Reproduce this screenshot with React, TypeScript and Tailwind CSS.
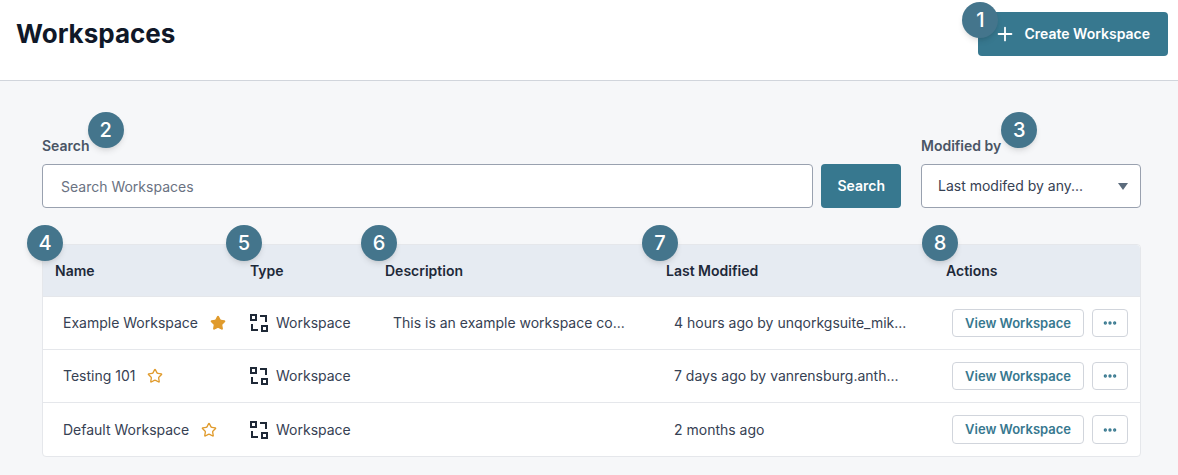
import React from 'react';
import { Ellipsis, Plus, Star } from 'lucide-react';

const Badge: React.FC<{ n: number; className: string }> = ({ n, className }) => (
  <span
    className={`absolute z-10 flex h-9 w-9 items-center justify-center rounded-full bg-[#44758c] text-xl font-medium text-white shadow-md ${className}`}
  >
    {n}
  </span>
);

const WorkspaceIcon = () => (
  <svg width="18" height="18" viewBox="0 0 18 18" fill="none" stroke="#1f2937" strokeWidth="2" className="shrink-0">
    <rect x="1" y="1" width="5" height="5" />
    <rect x="12" y="12" width="5" height="5" />
    <path d="M10 2h6v6" />
    <path d="M2 10v6h6" />
  </svg>
);

const rows = [
  {
    name: 'Example Workspace',
    starred: true,
    description: 'This is an example workspace co...',
    modified: '4 hours ago by unqorkgsuite_mik...',
  },
  { name: 'Testing 101', starred: false, description: '', modified: '7 days ago by vanrensburg.anth...' },
  { name: 'Default Workspace', starred: false, description: '', modified: '2 months ago' },
];

const columns = 'grid grid-cols-[195px_135px_281px_280px_1fr]';

export default function App() {
  return (
    <div className="flex h-[475px] flex-col overflow-hidden bg-[#f6f7f9] font-['Inter',sans-serif] text-sm text-gray-700">
      <header className="relative z-10 flex h-20 shrink-0 items-start justify-between bg-white pl-4 pr-2.5 pt-3 ring-1 ring-gray-300">
        <h1 className="mt-1 text-[26px] font-bold leading-9 text-gray-900">Workspaces</h1>
        <button className="relative flex h-11 items-center gap-2 rounded bg-[#37788f] pl-4 pr-4.5 text-sm font-semibold text-white">
          <Badge n={1} className="-left-4 -top-2.5" />
          <Plus size={22} strokeWidth={2} />
          Create Workspace
        </button>
      </header>

      <main className="flex flex-col gap-9 pl-[42px] pr-[37px] pt-14">
        <div className="flex items-end gap-2">
          <div className="flex flex-1 flex-col gap-2">
            <label className="relative self-start text-sm font-semibold text-gray-600">
              Search
              <Badge n={2} className="-top-6 left-full -ml-0.5" />
            </label>
            <input
              placeholder="Search Workspaces"
              className="h-11 w-full rounded border border-gray-400 bg-white px-4.5 text-sm text-gray-500 placeholder:text-gray-500"
            />
          </div>
          <button className="mr-3 h-11 rounded bg-[#37788f] px-4 text-sm font-semibold text-white">Search</button>
          <div className="flex w-55 flex-col gap-2">
            <label className="relative self-start text-sm font-semibold text-gray-600">
              Modified by
              <Badge n={3} className="-top-6 left-full" />
            </label>
            <button className="flex h-11 items-center justify-between rounded border border-gray-400 bg-white pl-4 pr-3 text-sm text-gray-700">
              Last modifed by any...
              <svg width="10" height="7" viewBox="0 0 10 7" fill="#5b6b7c">
                <path d="M0 0h10L5 7z" />
              </svg>
            </button>
          </div>
        </div>

        <div className="rounded border border-gray-200 bg-white">
          <div className={`${columns} h-13 items-center rounded-t border-b border-gray-200 bg-[#e6ebf2] text-sm font-semibold text-gray-800`}>
            <div className="relative flex h-full items-center pl-3">
              <Badge n={4} className="-left-4 -top-5" />
              Name
            </div>
            <div className="relative flex h-full items-center pl-3">
              <Badge n={5} className="-left-3 -top-5" />
              Type
            </div>
            <div className="relative flex h-full items-center pl-3">
              <Badge n={6} className="-left-3 -top-5" />
              Description
            </div>
            <div className="relative flex h-full items-center pl-3">
              <Badge n={7} className="-left-3 -top-5" />
              Last Modified
            </div>
            <div className="relative flex h-full items-center pl-3">
              <Badge n={8} className="-left-3 -top-5" />
              Actions
            </div>
          </div>
          {rows.map((row, i) => (
            <div
              key={row.name}
              className={`${columns} h-[53px] items-center ${i < rows.length - 1 ? 'border-b border-gray-200' : ''}`}
            >
              <div className="flex items-center gap-3 pl-5">
                {row.name}
                <Star size={16} className="text-[#e09b2d]" fill={row.starred ? 'currentColor' : 'none'} />
              </div>
              <div className="flex items-center gap-2 pl-3">
                <WorkspaceIcon />
                Workspace
              </div>
              <div className="pl-5">{row.description}</div>
              <div className="pl-5">{row.modified}</div>
              <div className="flex items-stretch justify-end gap-2 pr-3">
                <button className="whitespace-nowrap rounded border border-gray-300 px-3 py-1 text-[13px] font-semibold text-[#37788f]">
                  View Workspace
                </button>
                <button className="flex w-9 items-center justify-center rounded border border-gray-300 text-[#37788f]">
                  <Ellipsis size={16} strokeWidth={3} />
                </button>
              </div>
            </div>
          ))}
        </div>
      </main>
    </div>
  );
}
